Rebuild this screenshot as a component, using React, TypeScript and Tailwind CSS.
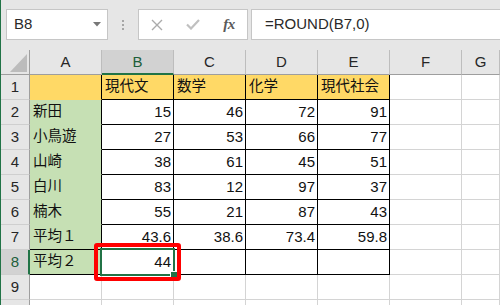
import React from "react";

const FONT = "font-['Liberation_Sans','Noto_Sans_CJK_JP',sans-serif]";

type CellProps = {
  cls: string;
  children?: React.ReactNode;
  right?: boolean;
  jp?: boolean;
  extra?: React.ReactNode;
};

function Cell({ cls, children, right, jp, extra }: CellProps) {
  return (
    <div
      className={`relative flex items-center border-r border-b ${cls} ${
        right ? "justify-end pr-[2px]" : "justify-start pl-[3px]"
      } ${jp ? "text-[14.5px]" : "text-[15px]"} text-[#111] whitespace-nowrap`}
    >
      {children}
      {extra}
    </div>
  );
}

const HDR =
  "flex items-center justify-center bg-[#e6e6e6] border-r border-b border-r-[#bdbdbd] border-b-[#9e9e9e] text-[15px] text-[#262626]";
const ROWH =
  "flex items-center justify-center bg-[#e6e6e6] border-r border-b border-r-[#9e9e9e] border-b-[#cfcfcf] text-[15px] text-[#262626]";

const YEL = "bg-[#ffd966] border-r-black border-b-black";
const WHT = "bg-white border-r-black border-b-black";
const GRID = "bg-white border-r-[#d4d4d4] border-b-[#d4d4d4]";

const subjects = ["現代文", "数学", "化学", "現代社会"];
const names = ["新田", "小鳥遊", "山崎", "白川", "楠木"];
const scores = [
  [15, 46, 72, 91],
  [27, 53, 66, 77],
  [38, 61, 45, 51],
  [83, 12, 97, 37],
  [55, 21, 87, 43],
];
const avg1 = ["43.6", "38.6", "73.4", "59.8"];

export default function App() {
  const rows: React.ReactNode[] = [];

  rows.push(
    <div key="corner" className="flex items-end justify-end bg-[#e6e6e6] border-r border-b border-r-[#9e9e9e] border-b-[#9e9e9e] pr-[2px] pb-[2px]">
      <svg width="17" height="18" viewBox="0 0 17 18">
        <polygon points="17,0 17,18 0,18" fill="#bcbcbc" />
      </svg>
    </div>
  );
  ["A", "B", "C", "D", "E", "F", "G"].forEach((c) => {
    if (c === "B") {
      rows.push(
        <div key={c} className="flex items-center justify-center bg-[#d2d2d2] border-r border-r-[#bdbdbd] border-b-2 border-b-[#217346] text-[15px] text-[#1d5e3a] pt-[1px]">
          {c}
        </div>
      );
    } else {
      rows.push(
        <div key={c} className={HDR}>
          {c}
        </div>
      );
    }
  });

  for (let r = 1; r <= 10; r++) {
    if (r === 8) {
      rows.push(
        <div key={`rh${r}`} className="flex items-center justify-center bg-[#d2d2d2] border-r-2 border-b border-r-[#217346] border-b-[#cfcfcf] text-[15px] text-[#1d5e3a] pl-[1px]">
          {r}
        </div>
      );
    } else {
      rows.push(
        <div key={`rh${r}`} className={ROWH}>
          {r === 10 ? "" : r}
        </div>
      );
    }

    if (r === 1) {
      rows.push(<Cell key={`a${r}`} cls="bg-[#ffd966] border-r-black border-b-[#ffd966]" />);
    } else if (r >= 2 && r <= 6) {
      rows.push(
        <Cell key={`a${r}`} cls="bg-[#c6e0b4] border-r-black border-b-[#c6e0b4]" jp>
          {names[r - 2]}
        </Cell>
      );
    } else if (r === 7) {
      rows.push(
        <Cell key={`a${r}`} cls="bg-[#c6e0b4] border-r-black border-b-black" jp>
          平均１
        </Cell>
      );
    } else if (r === 8) {
      rows.push(
        <Cell key={`a${r}`} cls="bg-[#c6e0b4] border-r-black border-b-black" jp>
          平均２
        </Cell>
      );
    } else {
      rows.push(<Cell key={`a${r}`} cls={GRID} />);
    }

    for (let c = 0; c < 4; c++) {
      const k = `c${r}-${c}`;
      if (r === 1) {
        rows.push(
          <Cell key={k} cls={YEL} jp>
            {subjects[c]}
          </Cell>
        );
      } else if (r >= 2 && r <= 6) {
        rows.push(
          <Cell key={k} cls={WHT} right>
            {scores[r - 2][c]}
          </Cell>
        );
      } else if (r === 7) {
        rows.push(
          <Cell key={k} cls={WHT} right>
            {avg1[c]}
          </Cell>
        );
      } else if (r === 8) {
        if (c === 0) {
          rows.push(
            <Cell
              key={k}
              cls={WHT}
              right
              extra={
                <>
                  <div className="absolute -left-[2px] -top-[2px] w-[75px] h-[28px] border-2 border-[#217346] z-10" />
                  <div className="absolute left-[68px] top-[21px] w-[8px] h-[8px] bg-[#217346] border border-white z-20" />
                  <div className="absolute -left-[8px] -top-[7px] w-[87px] h-[38px] border-[4px] border-[#ff0000] rounded-[3px] z-30" />
                </>
              }
            >
              44
            </Cell>
          );
        } else {
          rows.push(<Cell key={k} cls={WHT} />);
        }
      } else {
        rows.push(<Cell key={k} cls={GRID} />);
      }
    }

    rows.push(<Cell key={`f${r}`} cls={GRID} />);
    rows.push(<Cell key={`g${r}`} cls={GRID} />);
  }

  return (
    <div className={`w-[500px] h-[305px] overflow-hidden bg-[#e6e6e6] border-l border-l-[#217346] ${FONT}`}>
      <div className="h-[50px] flex items-start pt-[9px] pl-[5px] overflow-hidden">
        <div className="w-[102px] h-[31px] shrink-0 bg-white border border-[#c6c6c6] flex items-center justify-between pl-[7px] pr-[6px]">
          <span className="text-[15px] text-[#2a2a2a]">B8</span>
          <svg width="8" height="5" viewBox="0 0 8 5" className="-mt-[1px]">
            <polygon points="0,0 8,0 4,4.5" fill="#777777" />
          </svg>
        </div>
        <div className="ml-[14px] h-[31px] flex flex-col justify-center gap-[2px] shrink-0">
          <div className="w-[2px] h-[2px] bg-[#a6a6a6]" />
          <div className="w-[2px] h-[2px] bg-[#a6a6a6]" />
          <div className="w-[2px] h-[2px] bg-[#a6a6a6]" />
        </div>
        <div className="ml-[14px] w-[110px] h-[31px] shrink-0 bg-white border border-[#c6c6c6] flex">
          <div className="w-[36px] flex items-center justify-center">
            <svg width="12" height="12" viewBox="0 0 12 12">
              <path d="M1 1 L11 11 M11 1 L1 11" stroke="#ababab" strokeWidth="1.4" fill="none" />
            </svg>
          </div>
          <div className="w-[36px] flex items-center justify-center">
            <svg width="14" height="11" viewBox="0 0 14 11">
              <path d="M1 5.5 L5 9.5 L13 1" stroke="#c0c0c0" strokeWidth="2.2" fill="none" />
            </svg>
          </div>
          <div className="w-[36px] flex items-center justify-center">
            <span className="font-['Liberation_Serif',serif] italic text-[15px] text-[#5a5a5a] font-bold tracking-[-0.5px]">
              fx
            </span>
          </div>
        </div>
        <div className="ml-[3px] w-[270px] h-[31px] shrink-0 bg-white border border-[#c6c6c6] flex items-center pl-[13px]">
          <span className="text-[15px] text-[#2a2a2a]">=ROUND(B7,0)</span>
        </div>
      </div>

      <div className="grid grid-cols-[29px_72px_72px_72px_72px_72px_72px_1fr] auto-rows-[25px] bg-white">
        {rows}
      </div>
    </div>
  );
}
